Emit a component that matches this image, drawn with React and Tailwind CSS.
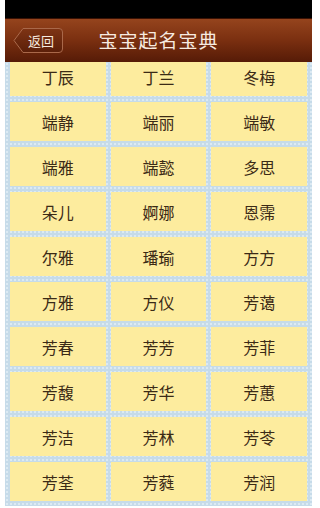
/**
 * Baby name book screen
 * Brown nav bar with a back button and a 3-column grid of name cells
 */

const NAMES = [
  ['丁辰', '丁兰', '冬梅'],
  ['端静', '端丽', '端敏'],
  ['端雅', '端懿', '多思'],
  ['朵儿', '婀娜', '恩霈'],
  ['尔雅', '璠瑜', '方方'],
  ['方雅', '方仪', '芳蔼'],
  ['芳春', '芳芳', '芳菲'],
  ['芳馥', '芳华', '芳蕙'],
  ['芳洁', '芳林', '芳苓'],
  ['芳荃', '芳蕤', '芳润'],
];

const font = { fontFamily: '"Noto Sans CJK SC", "Noto Sans", sans-serif' };

const BackButton = () => (
  <button className="relative h-[27px] w-[51px] ml-[8px] flex items-center justify-end pr-[10px]">
    <svg className="absolute inset-0" width="51" height="27" viewBox="0 0 51 27">
      <defs>
        <linearGradient id="bb" x1="0" y1="0" x2="0" y2="1">
          <stop offset="0" stopColor="#7e3414" />
          <stop offset="1" stopColor="#5b1f09" />
        </linearGradient>
      </defs>
      <path
        d="M1 13.5 L10 1.5 H46 Q49.5 1.5 49.5 5 V22 Q49.5 25.5 46 25.5 H10 Z"
        fill="url(#bb)"
        stroke="#a9684a"
        strokeWidth="1"
      />
    </svg>
    <span className="relative text-[13px] leading-none text-[#f6e9df]">返回</span>
  </button>
);

export default function App() {
  return (
    <div className="w-[316px] h-[508px] bg-white" style={font}>
      <div className="ml-[5px] w-[307px] h-[506px] flex flex-col overflow-hidden bg-[#c6dbe9]">
        {/* status bar */}
        <div className="h-[18px] bg-black shrink-0"></div>

        {/* nav bar */}
        <div className="relative h-[44px] shrink-0 flex items-center border-t border-[#3a1204] bg-linear-to-b from-[#95441d] via-[#7a2f10] to-[#561b07]">
          <BackButton />
          <div className="absolute inset-0 flex items-center justify-center pointer-events-none">
            <span className="text-[19px] tracking-[1px] text-[#f7ebe0]">宝宝起名宝典</span>
          </div>
        </div>

        {/* name grid */}
        <div className="flex-1 overflow-hidden bg-[radial-gradient(circle,_#dceaf3_0.8px,_transparent_1.1px)] bg-[length:4px_4px]">
          <div className="-mt-[5px] px-[5px] grid grid-cols-3 gap-x-[5px] gap-y-[6px]">
            {NAMES.flat().map((n, i) => (
              <div
                key={i}
                className="h-[39px] flex items-center justify-center bg-[#fdec9e] text-[16px] text-[#3b2a16]"
              >
                {n}
              </div>
            ))}
          </div>
        </div>
      </div>
    </div>
  );
}
